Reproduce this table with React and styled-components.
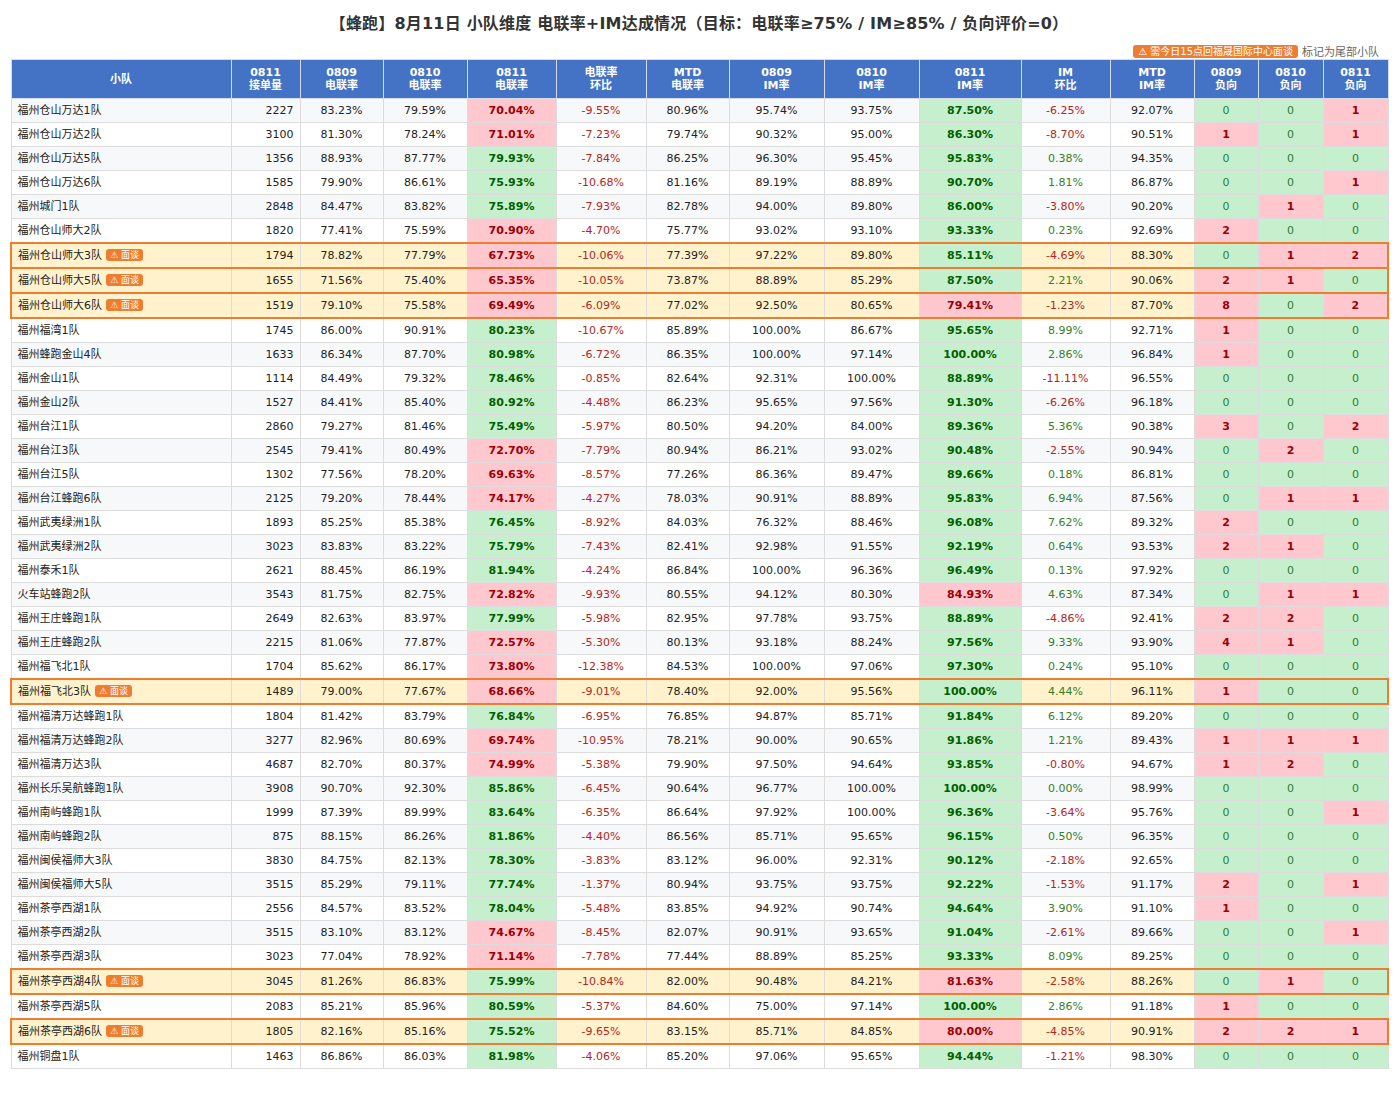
import React from "react";
import styled, {createGlobalStyle} from "styled-components";

const FONT = `"DejaVu Sans", "Noto Sans CJK SC", sans-serif`;
const HEADER_BLUE = "#4472c4";
const ORANGE = "#ed7d31";
const LINE = "#dcdcdc";

const GlobalStyle = createGlobalStyle`
  body {
    margin: 0;
    background: #fff;
    font-family: ${FONT};
    color: #222;
  }
`

const Page = styled.div`
  padding: 14px 12px 30px 10px;
`

const Title = styled.h1`
  margin: 0;
  font-size: 16px;
  line-height: 20px;
  font-weight: bold;
  color: #333;
  text-align: center;
  letter-spacing: 0.2px;
`

const Legend = styled.div`
  display: flex;
  justify-content: flex-end;
  align-items: center;
  gap: 4px;
  height: 14px;
  margin-top: 10px;
  padding-right: 9px;
  font-size: 11px;
  color: #666;
`

const LegendBadge = styled.span`
  background-color: ${ORANGE};
  color: #fff;
  border-radius: 3px;
  font-size: 10px;
  line-height: 13px;
  padding: 0 5px;
`

const Table = styled.table`
  margin-top: 1px;
  width: 1377px;
  table-layout: fixed;
  border-collapse: collapse;
  font-size: 11px;
  line-height: 13px;

  > thead th {
    background-color: ${HEADER_BLUE};
    color: #fff;
    font-weight: bold;
    text-align: center;
    padding: 6px 4px;
    border: 1px solid #d3dae8;
  }
`

const Row = styled.tr`
  background-color: ${props => props.$hl ? "#fff2cc" : props.$odd ? "#f7f8fa" : "#fff"};

  > td {
    border: 1px solid ${LINE};
    ${props => props.$hl ? `
      border-top: 2px solid ${ORANGE};
      border-bottom: 2px solid ${ORANGE};
    ` : ""}
  }

  > td:first-child {
    ${props => props.$hl ? `border-left: 2px solid ${ORANGE};` : ""}
  }

  > td:last-child {
    ${props => props.$hl ? `border-right: 2px solid ${ORANGE};` : ""}
  }
`

const TONES = {
    good: "background-color: #c6efce; color: #006100; font-weight: bold;",
    bad: "background-color: #ffc7ce; color: #9c0006; font-weight: bold;",
    zero: "background-color: #c6efce; color: #2e7d32;",
    up: "color: #3a7d24;",
    down: "color: #b3261e;",
    plain: "",
};

const Cell = styled.td`
  padding: 5px 6px;
  white-space: nowrap;
  overflow: hidden;
  text-align: ${props => props.$align || "center"};
  ${props => TONES[props.$tone || "plain"]}
`

const TalkBadge = styled.span`
  display: inline-block;
  margin-left: 4px;
  padding: 0 4px;
  border-radius: 3px;
  background-color: ${ORANGE};
  color: #fff;
  font-size: 9px;
  line-height: 12px;
  vertical-align: 1px;
`

const WIDTHS = [220, 69, 83, 84, 89, 90, 83, 95, 95, 102, 89, 84, 64, 65, 65];

const HEADERS = [
    ["小队"], ["0811", "接单量"], ["0809", "电联率"], ["0810", "电联率"], ["0811", "电联率"],
    ["电联率", "环比"], ["MTD", "电联率"], ["0809", "IM率"], ["0810", "IM率"], ["0811", "IM率"],
    ["IM", "环比"], ["MTD", "IM率"], ["0809", "负向"], ["0810", "负向"], ["0811", "负向"],
];

// 小队, 接单量, 电联率 0809/0810/0811, 环比, MTD, IM率 0809/0810/0811, 环比, MTD, 负向 0809/0810/0811, 面谈
const ROWS = [
    ["福州仓山万达1队", 2227, "83.23", "79.59", "70.04", "-9.55", "80.96", "95.74", "93.75", "87.50", "-6.25", "92.07", 0, 0, 1],
    ["福州仓山万达2队", 3100, "81.30", "78.24", "71.01", "-7.23", "79.74", "90.32", "95.00", "86.30", "-8.70", "90.51", 1, 0, 1],
    ["福州仓山万达5队", 1356, "88.93", "87.77", "79.93", "-7.84", "86.25", "96.30", "95.45", "95.83", "0.38", "94.35", 0, 0, 0],
    ["福州仓山万达6队", 1585, "79.90", "86.61", "75.93", "-10.68", "81.16", "89.19", "88.89", "90.70", "1.81", "86.87", 0, 0, 1],
    ["福州城门1队", 2848, "84.47", "83.82", "75.89", "-7.93", "82.78", "94.00", "89.80", "86.00", "-3.80", "90.20", 0, 1, 0],
    ["福州仓山师大2队", 1820, "77.41", "75.59", "70.90", "-4.70", "75.77", "93.02", "93.10", "93.33", "0.23", "92.69", 2, 0, 0],
    ["福州仓山师大3队", 1794, "78.82", "77.79", "67.73", "-10.06", "77.39", "97.22", "89.80", "85.11", "-4.69", "88.30", 0, 1, 2, true],
    ["福州仓山师大5队", 1655, "71.56", "75.40", "65.35", "-10.05", "73.87", "88.89", "85.29", "87.50", "2.21", "90.06", 2, 1, 0, true],
    ["福州仓山师大6队", 1519, "79.10", "75.58", "69.49", "-6.09", "77.02", "92.50", "80.65", "79.41", "-1.23", "87.70", 8, 0, 2, true],
    ["福州福湾1队", 1745, "86.00", "90.91", "80.23", "-10.67", "85.89", "100.00", "86.67", "95.65", "8.99", "92.71", 1, 0, 0],
    ["福州蜂跑金山4队", 1633, "86.34", "87.70", "80.98", "-6.72", "86.35", "100.00", "97.14", "100.00", "2.86", "96.84", 1, 0, 0],
    ["福州金山1队", 1114, "84.49", "79.32", "78.46", "-0.85", "82.64", "92.31", "100.00", "88.89", "-11.11", "96.55", 0, 0, 0],
    ["福州金山2队", 1527, "84.41", "85.40", "80.92", "-4.48", "86.23", "95.65", "97.56", "91.30", "-6.26", "96.18", 0, 0, 0],
    ["福州台江1队", 2860, "79.27", "81.46", "75.49", "-5.97", "80.50", "94.20", "84.00", "89.36", "5.36", "90.38", 3, 0, 2],
    ["福州台江3队", 2545, "79.41", "80.49", "72.70", "-7.79", "80.94", "86.21", "93.02", "90.48", "-2.55", "90.94", 0, 2, 0],
    ["福州台江5队", 1302, "77.56", "78.20", "69.63", "-8.57", "77.26", "86.36", "89.47", "89.66", "0.18", "86.81", 0, 0, 0],
    ["福州台江蜂跑6队", 2125, "79.20", "78.44", "74.17", "-4.27", "78.03", "90.91", "88.89", "95.83", "6.94", "87.56", 0, 1, 1],
    ["福州武夷绿洲1队", 1893, "85.25", "85.38", "76.45", "-8.92", "84.03", "76.32", "88.46", "96.08", "7.62", "89.32", 2, 0, 0],
    ["福州武夷绿洲2队", 3023, "83.83", "83.22", "75.79", "-7.43", "82.41", "92.98", "91.55", "92.19", "0.64", "93.53", 2, 1, 0],
    ["福州泰禾1队", 2621, "88.45", "86.19", "81.94", "-4.24", "86.84", "100.00", "96.36", "96.49", "0.13", "97.92", 0, 0, 0],
    ["火车站蜂跑2队", 3543, "81.75", "82.75", "72.82", "-9.93", "80.55", "94.12", "80.30", "84.93", "4.63", "87.34", 0, 1, 1],
    ["福州王庄蜂跑1队", 2649, "82.63", "83.97", "77.99", "-5.98", "82.95", "97.78", "93.75", "88.89", "-4.86", "92.41", 2, 2, 0],
    ["福州王庄蜂跑2队", 2215, "81.06", "77.87", "72.57", "-5.30", "80.13", "93.18", "88.24", "97.56", "9.33", "93.90", 4, 1, 0],
    ["福州福飞北1队", 1704, "85.62", "86.17", "73.80", "-12.38", "84.53", "100.00", "97.06", "97.30", "0.24", "95.10", 0, 0, 0],
    ["福州福飞北3队", 1489, "79.00", "77.67", "68.66", "-9.01", "78.40", "92.00", "95.56", "100.00", "4.44", "96.11", 1, 0, 0, true],
    ["福州福清万达蜂跑1队", 1804, "81.42", "83.79", "76.84", "-6.95", "76.85", "94.87", "85.71", "91.84", "6.12", "89.20", 0, 0, 0],
    ["福州福清万达蜂跑2队", 3277, "82.96", "80.69", "69.74", "-10.95", "78.21", "90.00", "90.65", "91.86", "1.21", "89.43", 1, 1, 1],
    ["福州福清万达3队", 4687, "82.70", "80.37", "74.99", "-5.38", "79.90", "97.50", "94.64", "93.85", "-0.80", "94.67", 1, 2, 0],
    ["福州长乐吴航蜂跑1队", 3908, "90.70", "92.30", "85.86", "-6.45", "90.64", "96.77", "100.00", "100.00", "0.00", "98.99", 0, 0, 0],
    ["福州南屿蜂跑1队", 1999, "87.39", "89.99", "83.64", "-6.35", "86.64", "97.92", "100.00", "96.36", "-3.64", "95.76", 0, 0, 1],
    ["福州南屿蜂跑2队", 875, "88.15", "86.26", "81.86", "-4.40", "86.56", "85.71", "95.65", "96.15", "0.50", "96.35", 0, 0, 0],
    ["福州闽侯福师大3队", 3830, "84.75", "82.13", "78.30", "-3.83", "83.12", "96.00", "92.31", "90.12", "-2.18", "92.65", 0, 0, 0],
    ["福州闽侯福师大5队", 3515, "85.29", "79.11", "77.74", "-1.37", "80.94", "93.75", "93.75", "92.22", "-1.53", "91.17", 2, 0, 1],
    ["福州茶亭西湖1队", 2556, "84.57", "83.52", "78.04", "-5.48", "83.85", "94.92", "90.74", "94.64", "3.90", "91.10", 1, 0, 0],
    ["福州茶亭西湖2队", 3515, "83.10", "83.12", "74.67", "-8.45", "82.07", "90.91", "93.65", "91.04", "-2.61", "89.66", 0, 0, 1],
    ["福州茶亭西湖3队", 3023, "77.04", "78.92", "71.14", "-7.78", "77.44", "88.89", "85.25", "93.33", "8.09", "89.25", 0, 0, 0],
    ["福州茶亭西湖4队", 3045, "81.26", "86.83", "75.99", "-10.84", "82.00", "90.48", "84.21", "81.63", "-2.58", "88.26", 0, 1, 0, true],
    ["福州茶亭西湖5队", 2083, "85.21", "85.96", "80.59", "-5.37", "84.60", "75.00", "97.14", "100.00", "2.86", "91.18", 1, 0, 0],
    ["福州茶亭西湖6队", 1805, "82.16", "85.16", "75.52", "-9.65", "83.15", "85.71", "84.85", "80.00", "-4.85", "90.91", 2, 2, 1, true],
    ["福州铜盘1队", 1463, "86.86", "86.03", "81.98", "-4.06", "85.20", "97.06", "95.65", "94.44", "-1.21", "98.30", 0, 0, 0],
];

function rateTone(value, target) {
    return parseFloat(value) >= target ? "good" : "bad";
}

function trendTone(value) {
    return parseFloat(value) < 0 ? "down" : "up";
}

function negTone(value) {
    return value === 0 ? "zero" : "bad";
}

function TeamRow({row, index}) {
    const [name, count, d09, d10, d11, dHb, dMtd, i09, i10, i11, iHb, iMtd, n09, n10, n11, talk] = row;
    return (
        <Row $hl={talk} $odd={index % 2 === 0}>
            <Cell $align="left">
                {name}
                {talk ? <TalkBadge>⚠ 面谈</TalkBadge> : null}
            </Cell>
            <Cell $align="right">{count}</Cell>
            <Cell>{d09}%</Cell>
            <Cell>{d10}%</Cell>
            <Cell $tone={rateTone(d11, 75)}>{d11}%</Cell>
            <Cell $tone={trendTone(dHb)}>{dHb}%</Cell>
            <Cell>{dMtd}%</Cell>
            <Cell>{i09}%</Cell>
            <Cell>{i10}%</Cell>
            <Cell $tone={rateTone(i11, 85)}>{i11}%</Cell>
            <Cell $tone={trendTone(iHb)}>{iHb}%</Cell>
            <Cell>{iMtd}%</Cell>
            <Cell $tone={negTone(n09)}>{n09}</Cell>
            <Cell $tone={negTone(n10)}>{n10}</Cell>
            <Cell $tone={negTone(n11)}>{n11}</Cell>
        </Row>
    );
}

function App() {
    return (
        <Page>
            <GlobalStyle/>
            <Title>【蜂跑】8月11日 小队维度 电联率+IM达成情况（目标：电联率≥75% / IM≥85% / 负向评价=0）</Title>
            <Legend>
                <LegendBadge>⚠ 需今日15点回福晟国际中心面谈</LegendBadge>
                标记为尾部小队
            </Legend>
            <Table>
                <colgroup>
                    {WIDTHS.map((w, i) => <col key={i} style={{width: w}}/>)}
                </colgroup>
                <thead>
                <tr>
                    {HEADERS.map((lines, i) => (
                        <th key={i}>
                            {lines.map((l, j) => <div key={j}>{l}</div>)}
                        </th>
                    ))}
                </tr>
                </thead>
                <tbody>
                {ROWS.map((row, index) => <TeamRow key={row[0]} row={row} index={index}/>)}
                </tbody>
            </Table>
        </Page>
    );
}

export default App;
